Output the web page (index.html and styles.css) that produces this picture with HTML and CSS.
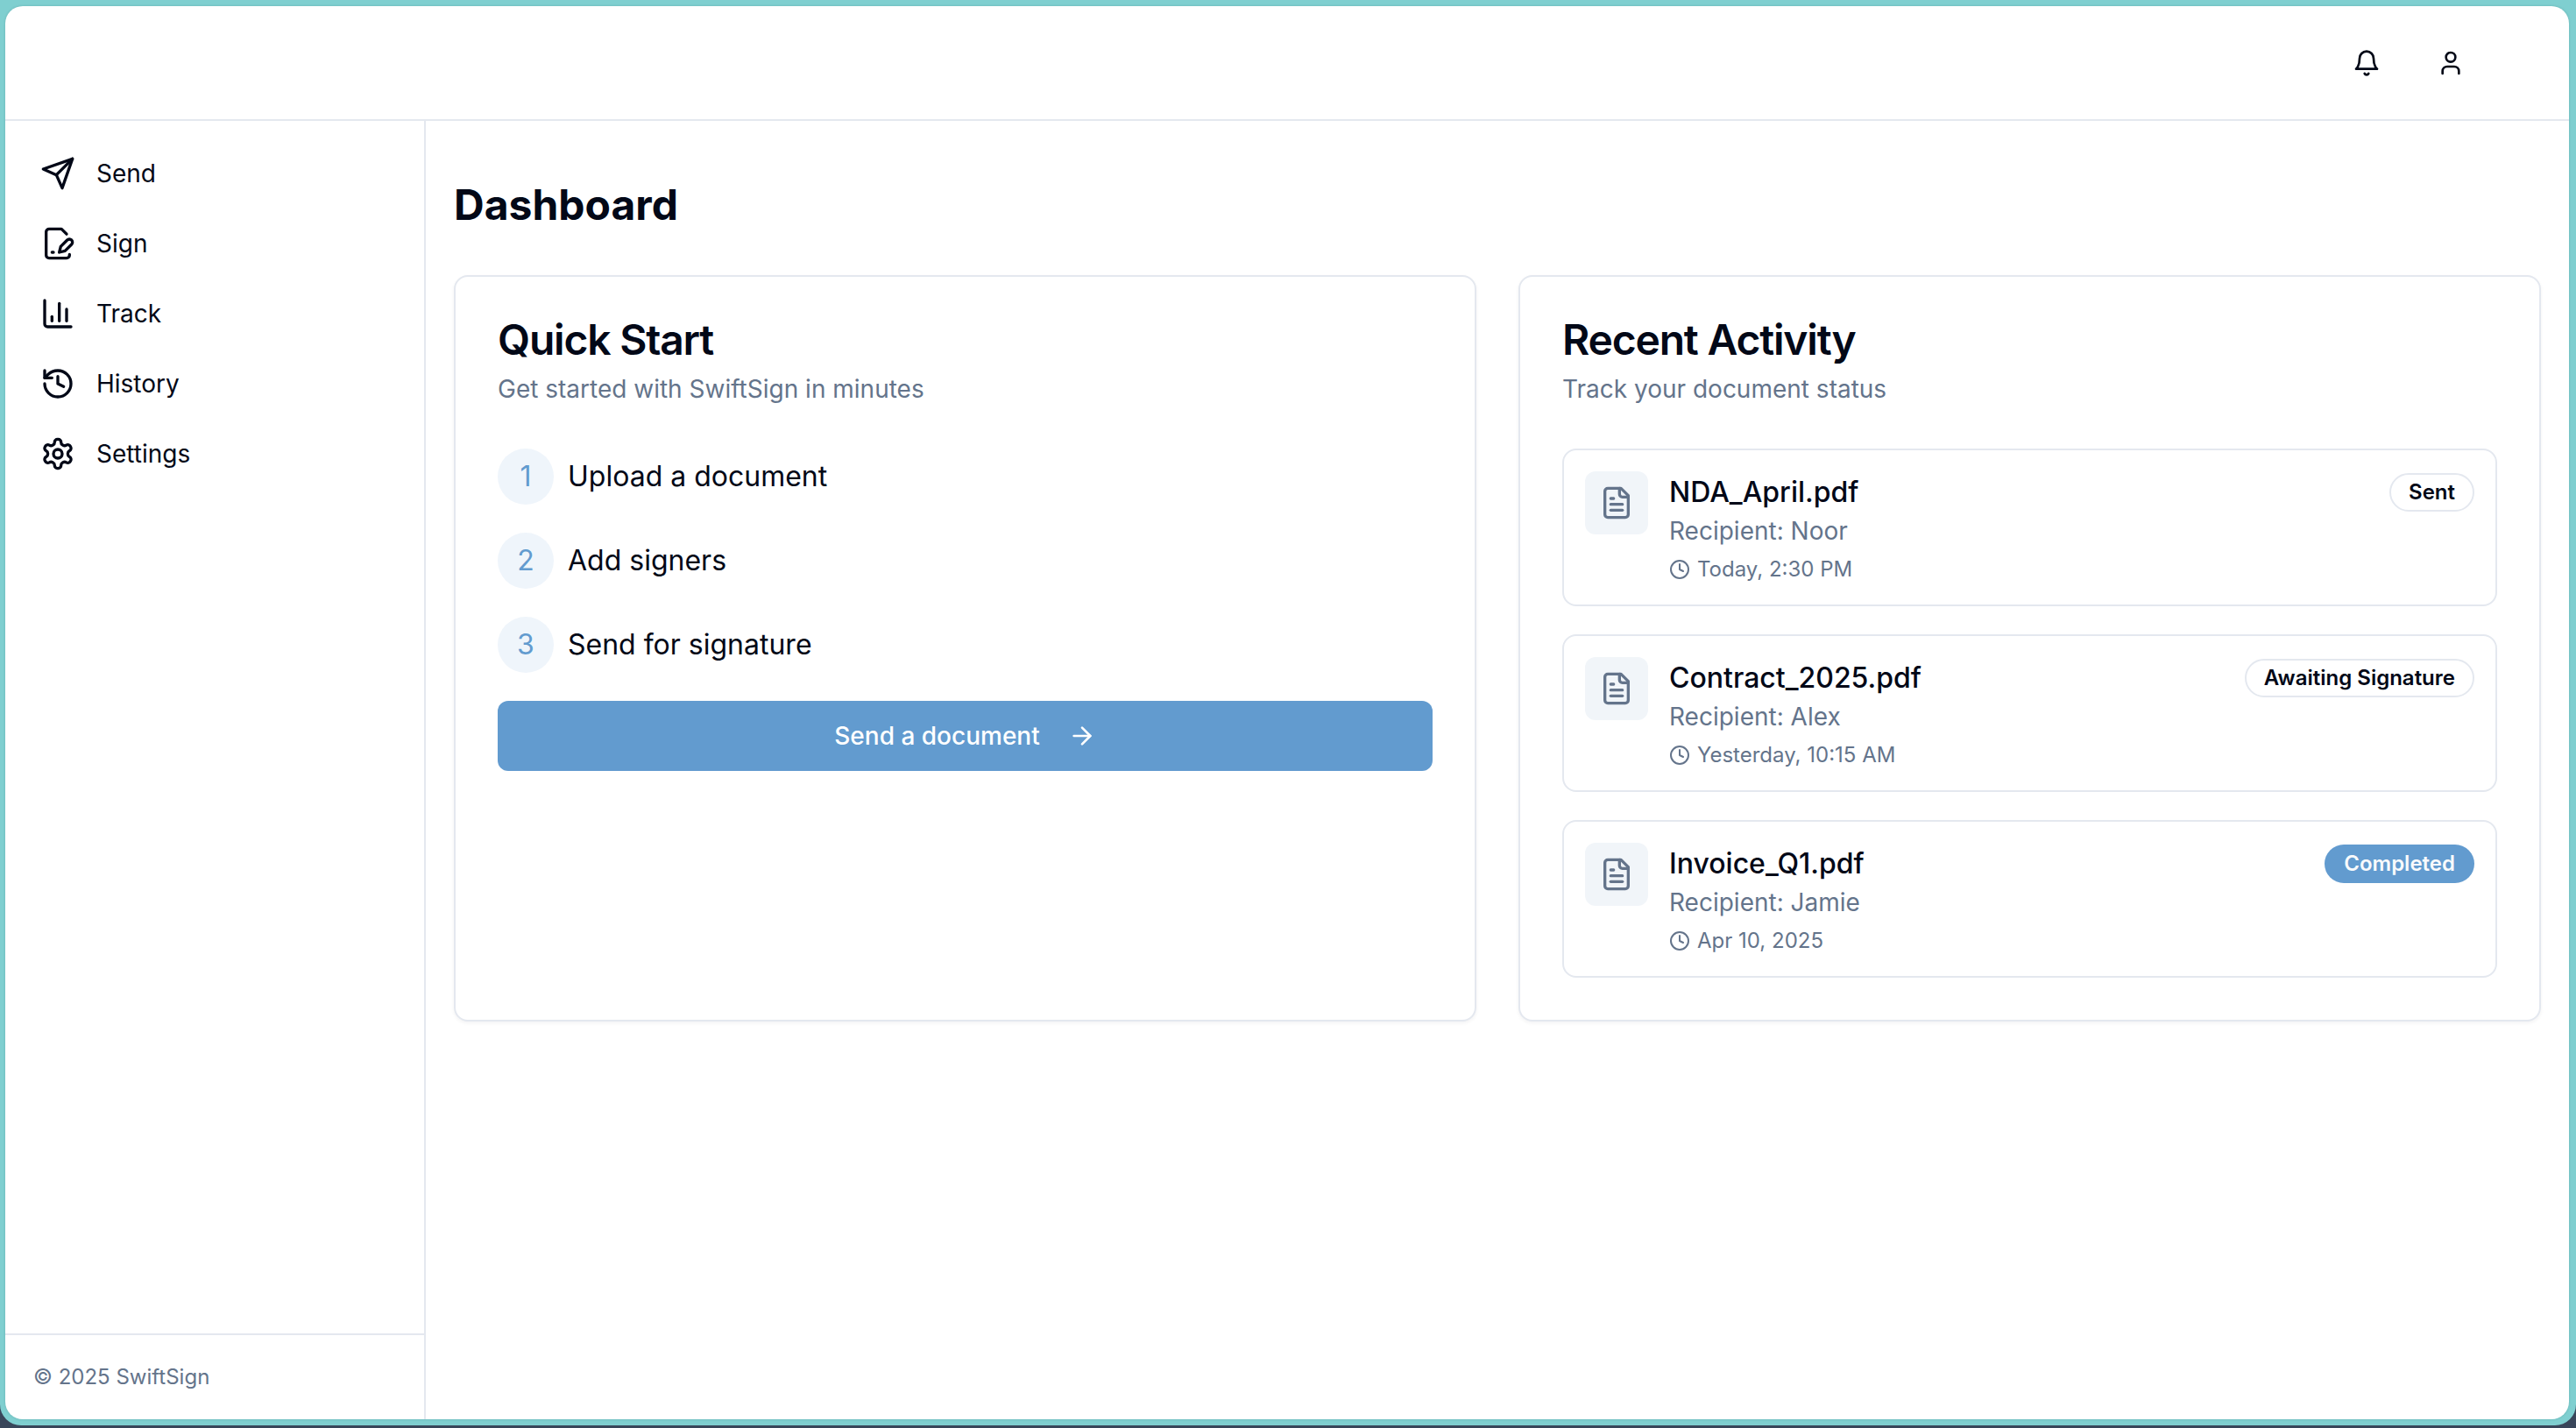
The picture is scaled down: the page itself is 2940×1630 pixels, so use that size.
FILE: index.html
```html
<!DOCTYPE html>
<html lang="en">
<head>
<meta charset="utf-8">
<title>SwiftSign Dashboard</title>
<link rel="stylesheet" href="styles.css">
</head>
<body>
<div class="frame">
  <div class="app">
    <header class="topbar">
      <button class="top-btn" aria-label="Notifications">
        <svg class="icon-top" viewBox="0 0 24 24"><path d="M6 8a6 6 0 0 1 12 0c0 7 3 9 3 9H3s3-2 3-9"/><path d="M10.3 21a1.94 1.94 0 0 0 3.4 0"/></svg>
      </button>
      <button class="top-btn" aria-label="Account">
        <svg class="icon-top" viewBox="0 0 24 24"><path d="M19 21v-2a4 4 0 0 0-4-4H9a4 4 0 0 0-4 4v2"/><circle cx="12" cy="7" r="4"/></svg>
      </button>
    </header>
    <div class="body">
      <aside class="sidebar">
        <nav class="nav">
          <a class="nav-item"><svg class="icon-nav" viewBox="0 0 24 24"><path d="m22 2-7 20-4-9-9-4Z"/><path d="M22 2 11 13"/></svg>Send</a>
          <a class="nav-item"><svg class="icon-nav" viewBox="0 0 24 24"><path d="M20 19.5v.5a2 2 0 0 1-2 2H6a2 2 0 0 1-2-2V4a2 2 0 0 1 2-2h8.5L18 5.5"/><path d="M8 18h1"/><path d="M18.42 9.61a2.1 2.1 0 1 1 2.97 2.97L16.95 17 13 18l.99-3.95 4.43-4.44Z"/></svg>Sign</a>
          <a class="nav-item"><svg class="icon-nav" viewBox="0 0 24 24"><path d="M3 3v16a2 2 0 0 0 2 2h16"/><path d="M18 17V9"/><path d="M13 17V5"/><path d="M8 17v-3"/></svg>Track</a>
          <a class="nav-item"><svg class="icon-nav" viewBox="0 0 24 24"><path d="M3 12a9 9 0 1 0 9-9 9.75 9.75 0 0 0-6.74 2.74L3 8"/><path d="M3 3v5h5"/><path d="M12 7v5l4 2"/></svg>History</a>
          <a class="nav-item"><svg class="icon-nav" viewBox="0 0 24 24"><path d="M12.22 2h-.44a2 2 0 0 0-2 2v.18a2 2 0 0 1-1 1.73l-.43.25a2 2 0 0 1-2 0l-.15-.08a2 2 0 0 0-2.73.73l-.22.38a2 2 0 0 0 .73 2.73l.15.1a2 2 0 0 1 1 1.72v.51a2 2 0 0 1-1 1.74l-.15.09a2 2 0 0 0-.73 2.73l.22.38a2 2 0 0 0 2.73.73l.15-.08a2 2 0 0 1 2 0l.43.25a2 2 0 0 1 1 1.73V20a2 2 0 0 0 2 2h.44a2 2 0 0 0 2-2v-.18a2 2 0 0 1 1-1.73l.43-.25a2 2 0 0 1 2 0l.15.08a2 2 0 0 0 2.73-.73l.22-.39a2 2 0 0 0-.73-2.73l-.15-.08a2 2 0 0 1-1-1.74v-.5a2 2 0 0 1 1-1.74l.15-.09a2 2 0 0 0 .73-2.73l-.22-.38a2 2 0 0 0-2.73-.73l-.15.08a2 2 0 0 1-2 0l-.43-.25a2 2 0 0 1-1-1.73V4a2 2 0 0 0-2-2z"/><circle cx="12" cy="12" r="3"/></svg>Settings</a>
        </nav>
        <footer class="side-foot">© 2025 SwiftSign</footer>
      </aside>
      <main class="main">
        <h1 class="page-title">Dashboard</h1>
        <div class="grid">
          <section class="card">
            <h2 class="card-title">Quick Start</h2>
            <p class="card-sub">Get started with SwiftSign in minutes</p>
            <ol class="steps">
              <li class="step"><span class="step-num">1</span>Upload a document</li>
              <li class="step"><span class="step-num">2</span>Add signers</li>
              <li class="step"><span class="step-num">3</span>Send for signature</li>
            </ol>
            <button class="cta">Send a document
              <svg class="icon-arrow" viewBox="0 0 24 24"><path d="M5 12h14"/><path d="m12 5 7 7-7 7"/></svg>
            </button>
          </section>
          <section class="card">
            <h2 class="card-title">Recent Activity</h2>
            <p class="card-sub">Track your document status</p>
            <div class="items">
              <article class="item">
                <div class="file-box"><svg class="icon-file" viewBox="0 0 24 24"><path d="M15 2H6a2 2 0 0 0-2 2v16a2 2 0 0 0 2 2h12a2 2 0 0 0 2-2V7Z"/><path d="M14 2v4a2 2 0 0 0 2 2h4"/><path d="M10 9H8"/><path d="M16 13H8"/><path d="M16 17H8"/></svg></div>
                <div class="item-text">
                  <div class="item-name">NDA_April.pdf</div>
                  <div class="item-rec">Recipient: Noor</div>
                  <div class="item-time"><svg class="icon-clock" viewBox="0 0 24 24"><circle cx="12" cy="12" r="10"/><path d="M12 6v6l4 2"/></svg>Today, 2:30 PM</div>
                </div>
                <span class="badge">Sent</span>
              </article>
              <article class="item">
                <div class="file-box"><svg class="icon-file" viewBox="0 0 24 24"><path d="M15 2H6a2 2 0 0 0-2 2v16a2 2 0 0 0 2 2h12a2 2 0 0 0 2-2V7Z"/><path d="M14 2v4a2 2 0 0 0 2 2h4"/><path d="M10 9H8"/><path d="M16 13H8"/><path d="M16 17H8"/></svg></div>
                <div class="item-text">
                  <div class="item-name">Contract_2025.pdf</div>
                  <div class="item-rec">Recipient: Alex</div>
                  <div class="item-time"><svg class="icon-clock" viewBox="0 0 24 24"><circle cx="12" cy="12" r="10"/><path d="M12 6v6l4 2"/></svg>Yesterday, 10:15 AM</div>
                </div>
                <span class="badge">Awaiting Signature</span>
              </article>
              <article class="item">
                <div class="file-box"><svg class="icon-file" viewBox="0 0 24 24"><path d="M15 2H6a2 2 0 0 0-2 2v16a2 2 0 0 0 2 2h12a2 2 0 0 0 2-2V7Z"/><path d="M14 2v4a2 2 0 0 0 2 2h4"/><path d="M10 9H8"/><path d="M16 13H8"/><path d="M16 17H8"/></svg></div>
                <div class="item-text">
                  <div class="item-name">Invoice_Q1.pdf</div>
                  <div class="item-rec">Recipient: Jamie</div>
                  <div class="item-time"><svg class="icon-clock" viewBox="0 0 24 24"><circle cx="12" cy="12" r="10"/><path d="M12 6v6l4 2"/></svg>Apr 10, 2025</div>
                </div>
                <span class="badge badge-done">Completed</span>
              </article>
            </div>
          </section>
        </div>
      </main>
    </div>
  </div>
</div>
</body>
</html>
```
FILE: styles.css
```css
* { box-sizing: border-box; }
html, body { margin: 0; padding: 0; }
body {
  width: 2940px;
  height: 1630px;
  overflow: hidden;
  background: #39465a;
  font-family: Inter, "Liberation Sans", sans-serif;
  color: #020817;
}
.frame {
  height: 1627px;
  padding: 7px 8px 7px 6px;
  background: #7fcfd0;
  border-radius: 0 0 24px 24px;
}
.app {
  height: 100%;
  display: flex;
  flex-direction: column;
  background: #fff;
  border-radius: 20px;
  overflow: hidden;
  box-shadow: 0 0 3px rgba(0, 70, 70, 0.2);
}
.topbar {
  flex: none;
  height: 131px;
  display: flex;
  justify-content: flex-end;
  align-items: center;
  gap: 32px;
  padding-right: 103px;
  border-bottom: 2px solid #e4e8ef;
}
.top-btn {
  width: 64px;
  height: 64px;
  padding: 0;
  border: 0;
  background: none;
  display: flex;
  align-items: center;
  justify-content: center;
}
svg {
  fill: none;
  stroke: currentColor;
  stroke-width: 2;
  stroke-linecap: round;
  stroke-linejoin: round;
  flex: none;
}
.icon-top { width: 32px; height: 32px; color: #020817; }
.body { flex: 1; display: flex; min-height: 0; }
.sidebar {
  flex: none;
  width: 480px;
  display: flex;
  flex-direction: column;
  border-right: 2px solid #e4e8ef;
}
.nav {
  flex: 1;
  display: flex;
  flex-direction: column;
  padding: 20px 32px 0 40px;
}
.nav-item {
  height: 80px;
  display: flex;
  align-items: center;
  gap: 24px;
  font-size: 28px;
  font-weight: 400;
  color: #020817;
}
.icon-nav { width: 40px; height: 40px; }
.side-foot {
  flex: none;
  height: 98px;
  padding: 32px;
  border-top: 2px solid #e4e8ef;
  font-size: 24px;
  line-height: 32px;
  color: #64748b;
}
.main { flex: 1; min-width: 0; padding: 66px 32px 0; }
.page-title {
  margin: 0 0 50px;
  font-size: 48px;
  line-height: 60px;
  font-weight: 700;
}
.grid {
  display: grid;
  grid-template-columns: 1fr 1fr;
  gap: 48px;
}
.card {
  border: 2px solid #e4e8ef;
  border-radius: 16px;
  padding: 48px;
  background: #fff;
  box-shadow: 0 2px 4px rgba(15, 23, 42, 0.05);
}
.card-title {
  margin: 0;
  font-size: 48px;
  line-height: 48px;
  font-weight: 600;
  letter-spacing: -1.2px;
}
.card-sub {
  margin: 12px 0 48px;
  font-size: 28px;
  line-height: 40px;
  color: #64748b;
}
.steps {
  list-style: none;
  margin: 0 0 32px;
  padding: 0;
  display: flex;
  flex-direction: column;
  gap: 32px;
}
.step {
  display: flex;
  align-items: center;
  gap: 16px;
  font-size: 32px;
  line-height: 64px;
  font-weight: 400;
}
.step-num {
  width: 64px;
  height: 64px;
  border-radius: 50%;
  background: #eff5fb;
  color: #629bcf;
  font-size: 32px;
  display: flex;
  align-items: center;
  justify-content: center;
}
.cta {
  width: 100%;
  height: 80px;
  border: 0;
  border-radius: 12px;
  background: #629bcf;
  color: #fff;
  font: 500 28px Inter, "Liberation Sans", sans-serif;
  display: flex;
  align-items: center;
  justify-content: center;
  gap: 32px;
}
.icon-arrow { width: 32px; height: 32px; }
.items { display: flex; flex-direction: column; gap: 32px; }
.item {
  height: 180px;
  display: flex;
  align-items: flex-start;
  gap: 24px;
  padding: 24px;
  border: 2px solid #e4e8ef;
  border-radius: 16px;
}
.file-box {
  flex: none;
  width: 72px;
  height: 72px;
  border-radius: 12px;
  background: #f1f5f9;
  display: flex;
  align-items: center;
  justify-content: center;
}
.icon-file { width: 40px; height: 40px; color: #64748b; }
.item-text { flex: 1; min-width: 0; padding-top: 2px; }
.item-name { font-size: 32px; line-height: 44px; font-weight: 500; }
.item-rec { font-size: 28px; line-height: 44px; color: #64748b; }
.item-time {
  display: flex;
  align-items: center;
  gap: 8px;
  font-size: 24px;
  line-height: 44px;
  color: #64748b;
}
.icon-clock { width: 24px; height: 24px; }
.badge {
  flex: none;
  height: 44px;
  margin-top: 2px;
  padding: 0 20px;
  border: 2px solid #e4e8ef;
  border-radius: 22px;
  font-size: 24px;
  line-height: 40px;
  font-weight: 600;
}
.badge-done { border-color: transparent; background: #629bcf; color: #f8fafc; }
```
